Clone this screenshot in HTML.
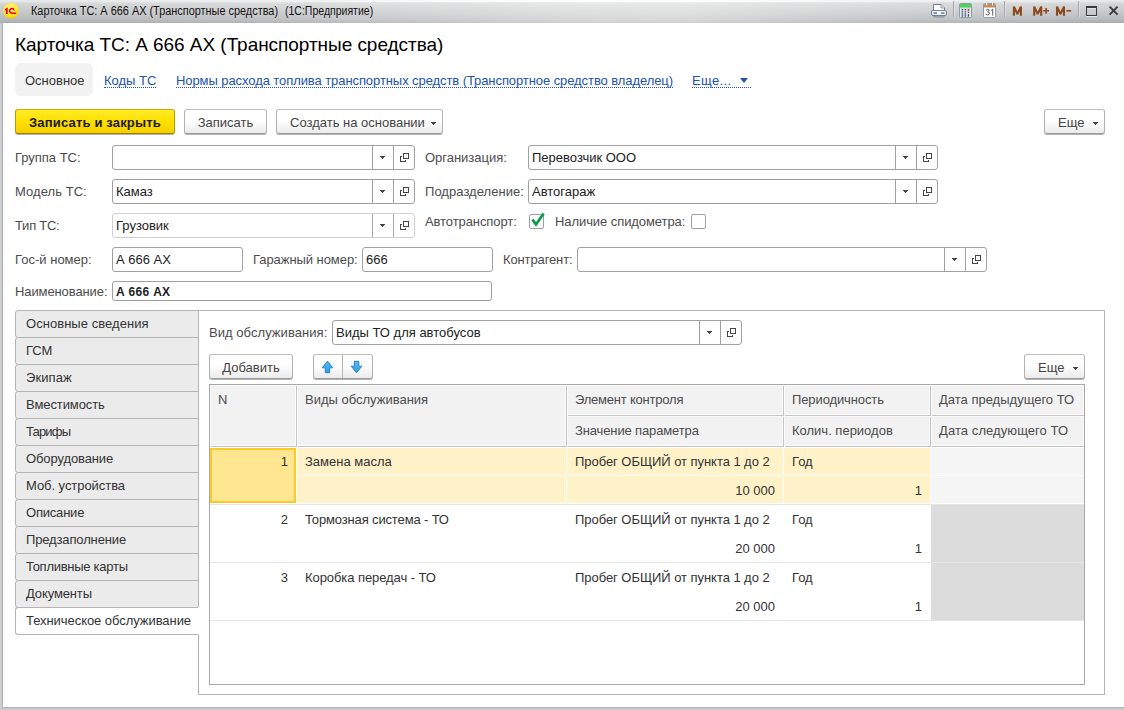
<!DOCTYPE html>
<html lang="ru">
<head>
<meta charset="utf-8">
<title>Карточка ТС</title>
<style>
*{box-sizing:border-box;margin:0;padding:0}
html,body{width:1124px;height:710px;overflow:hidden;background:#fff}
body{font-family:"Liberation Sans",sans-serif;font-size:13px;color:#333;position:relative}
.abs{position:absolute}
#titlebar{left:0;top:0;width:1124px;height:23px;background:linear-gradient(to right,rgba(255,255,255,0) 0,rgba(255,255,255,.12) 25%,rgba(255,255,255,.42) 50%,rgba(255,255,255,.45) 60%,rgba(255,255,255,.15) 82%,rgba(255,255,255,0) 100%),linear-gradient(#e6e7e8 0,#e0e1e2 8%,#d3d4d5 18%,#c6c7c8 55%,#b8b9bb 85%,#a9aaac 100%)}
#titlebar .t{left:31px;top:4px;font-size:12px;color:#111;white-space:nowrap;transform-origin:0 0}
#lb{left:0;top:23px;width:3px;height:687px;background:linear-gradient(to right,#d5d6d8,#c6c7c9 50%,#adaeb0)}
#bb{left:2px;top:707px;width:1122px;height:3px;background:linear-gradient(#adaeb0,#c4c5c7 50%,#d0d1d3)}
#rb{display:none}
h1{letter-spacing:-.045px;left:15px;top:33px;font-size:19px;font-weight:normal;color:#000;white-space:nowrap;line-height:24px}
.lbl{color:#4c4c4c;white-space:nowrap;line-height:16px;height:16px}
.fld{background:#fff;border:1px solid #a0a0a0;border-radius:3px;height:25px;line-height:23px;padding-left:3px;color:#222;white-space:nowrap;overflow:hidden}
.fld.ro{border-color:#d0d0d0}
.fld .b{position:absolute;top:0;width:21px;height:23px;border-left:1px solid #a0a0a0}
.fld.ro .b{border-left-color:#a8a8a8}
.btn{padding-top:1px;border:1px solid;border-color:#bebebe #b2b2b2 #9c9c9c;border-radius:3px;background:linear-gradient(#fff 0,#fff 45%,#ebebeb 100%);box-shadow:0 1px 0 rgba(0,0,0,.3);height:25px;line-height:23px;text-align:center;color:#444;white-space:nowrap}
.tab{left:15px;width:184px;height:28px;background:#ebebeb;border:1px solid #b4b4b4;border-radius:3px 0 0 3px;padding-left:10px;line-height:26px;color:#333;white-space:nowrap}
.lnk{color:#2253ac;white-space:nowrap;line-height:16px;border-bottom:1px dotted #2253ac;height:15px}
.hc{background:#f2f2f2;color:#4c4c4c;padding-left:8px;line-height:29px;white-space:nowrap;box-shadow:inset 0 0 0 1px #fbfbfb, 1px 1px 0 #c4c4c4}
.cell{height:28px;line-height:29px;color:#333;white-space:nowrap}
</style>
</head>
<body>
<div id="titlebar" class="abs"><div class="abs" style="left:0;top:0;width:1124px;height:2px;background:linear-gradient(to right,rgba(255,255,255,.1) 0,rgba(255,255,255,.35) 25%,rgba(255,255,255,.85) 45%,rgba(255,255,255,.85) 65%,rgba(255,255,255,.3) 85%,rgba(255,255,255,.1) 100%)"></div><svg class="abs" style="left:0;top:0" width="1124" height="23" viewBox="0 0 1124 23">
<defs>
<radialGradient id="g1c" cx="0.45" cy="0.3" r="0.75"><stop offset="0" stop-color="#fff68a"/><stop offset="0.6" stop-color="#ffe62a"/><stop offset="1" stop-color="#f6c800"/></radialGradient>
</defs>
<circle cx="11" cy="10.8" r="7.8" fill="url(#g1c)"/>
<path d="M4.9 9.5 L6.6 7.8 H7.7 V13.9 H6 V10.2 L4.9 10.9 Z" fill="#e3000b"/>
<path d="M14 9.5 A2.4 2.4 0 1 0 11.9 13.2 H16.2" fill="none" stroke="#e3000b" stroke-width="1.5"/>
<path d="M14.6 11.2 A2 2 0 0 0 12.6 9.6" fill="none" stroke="#e3000b" stroke-width="0.8" opacity=".75"/>
<!-- printer -->
<g>
<path d="M933.5 10.5 V4.5 H941 L944.5 8 V10.5" fill="#fff" stroke="#6b7f96" stroke-width="1"/>
<path d="M941 4.5 V8 H944.5" fill="#e8eef5" stroke="#6b7f96" stroke-width="0.8"/>
<rect x="931.5" y="10.5" width="15" height="5" rx="1.5" fill="#f4f6f9" stroke="#6b7f96" stroke-width="1"/>
<rect x="933.5" y="12.3" width="3.5" height="1.6" fill="#6b7f96"/><rect x="941" y="12.3" width="3.5" height="1.6" fill="#6b7f96"/>
<path d="M933 16.3 H945 L944 17.6 H934 Z" fill="#8293a8"/>
</g>
<!-- separators -->
<g shape-rendering="crispEdges"><rect x="953" y="1" width="1" height="16" fill="#a9aaac"/><rect x="954" y="1" width="1" height="16" fill="#e4e4e5" opacity=".7"/>
<rect x="1004" y="1" width="1" height="16" fill="#a9aaac"/><rect x="1005" y="1" width="1" height="16" fill="#e4e4e5" opacity=".7"/>
<rect x="1078" y="1" width="1" height="16" fill="#a9aaac"/><rect x="1079" y="1" width="1" height="16" fill="#e4e4e5" opacity=".7"/></g>
<!-- calculator -->
<rect x="959.5" y="3.5" width="12" height="14" rx="1" fill="#dfe9f3" stroke="#8a9cb0"/>
<rect x="960" y="4" width="11" height="3.6" fill="#4fd257"/>
<g fill="#4a4f57"><rect x="961.6" y="9" width="1.6" height="1.3"/><rect x="964.6" y="9" width="1.6" height="1.3"/>
<rect x="961.6" y="11.2" width="1.6" height="1.3"/><rect x="964.6" y="11.2" width="1.6" height="1.3"/><rect x="967.8" y="11.6" width="1.3" height="1.3"/>
<rect x="961.6" y="13.3" width="1.6" height="1.3"/><rect x="964.6" y="13.3" width="1.6" height="1.3"/>
<rect x="961.6" y="15.3" width="1.6" height="1.3"/><rect x="964.6" y="15.3" width="1.6" height="1.3"/><rect x="967.8" y="14.2" width="1.3" height="2.4"/></g>
<rect x="967.7" y="8.8" width="1.5" height="2.2" fill="#ff2a2a"/>
<!-- calendar -->
<rect x="983.5" y="3.5" width="12" height="14" rx="1.2" fill="#fff" stroke="#8a9cb0"/>
<path d="M984 7.6 V5 Q984 4 985 4 H994 Q995 4 995 5 V7.6 Z" fill="#c68a5c"/>
<rect x="986.2" y="3" width="1" height="2.4" fill="#fff"/><rect x="992" y="3" width="1" height="2.4" fill="#fff"/>
<g fill="none" stroke="#505560" stroke-width=".95" stroke-linecap="round" stroke-linejoin="round"><path d="M986.3 10 Q987.6 8.7 988.9 9.6 Q989.9 10.9 987.7 11.9 Q990.3 12.5 989.3 14.3 Q988 15.7 986.1 14.4"/><path d="M991.2 10.4 L992.7 9.1 V15.2"/></g>
<!-- M M+ M- -->
<g fill="none" stroke="#8b4a1e" stroke-width="2.1" stroke-linejoin="bevel">
<path d="M1013.9 15.7 V6.6 L1017.4 14 L1020.9 6.6 V15.7"/>
<path d="M1034.2 15.7 V6.6 L1037.7 14 L1041.2 6.6 V15.7"/>
<path d="M1057 15.7 V6.6 L1060.5 14 L1064 6.6 V15.7"/>
</g>
<g fill="none" stroke="#8b4a1e" stroke-width="1.6"><path d="M1043.2 10.8 H1049 M1046.1 7.9 V13.7"/><path d="M1066.3 10.8 H1071.2"/></g>
<!-- maximize -->
<g shape-rendering="crispEdges"><rect x="1086" y="16" width="11" height="1" fill="#f2f2f2" opacity=".8"/><rect x="1087" y="8" width="9" height="1" fill="#e6e6e6" opacity=".8"/>
<rect x="1086" y="6" width="11" height="2" fill="#3c3c3c"/><rect x="1086" y="15" width="11" height="1" fill="#3c3c3c"/><rect x="1086" y="6" width="1" height="10" fill="#3c3c3c"/><rect x="1096" y="6" width="1" height="10" fill="#3c3c3c"/></g>
<path d="M1109.6 6.6 L1117.6 14.6 M1117.6 6.6 L1109.6 14.6" stroke="#3c3c3c" stroke-width="2" fill="none"/>
</svg><div class="abs t" id="t1" style="transform:scaleX(.909)">Карточка ТС: А 666 АХ (Транспортные средства)</div><div class="abs t" id="t2" style="left:285.4px;transform:scaleX(.876)">(1С:Предприятие)</div></div>
<div id="lb" class="abs"></div><div id="rb" class="abs"></div><div id="bb" class="abs"></div>
<h1 class="abs">Карточка ТС: А 666 АХ (Транспортные средства)</h1>
<div class="abs" style="left:15px;top:63px;width:78px;height:33px;background:#f2f2f2;border-radius:6px"></div>
<div class="abs lbl" style="left:25px;top:73px;color:#333">Основное</div>
<div class="abs lnk" style="left:104px;top:73px">Коды ТС</div>
<div class="abs lnk" style="left:176px;top:73px;letter-spacing:-.079px">Нормы расхода топлива транспортных средств (Транспортное средство владелец)</div>
<div class="abs lnk" style="left:692px;top:73px;width:59px;letter-spacing:.35px">Еще...</div>
<div class="abs" style="left:740px;top:78px;width:0;height:0;border-left:4.5px solid transparent;border-right:4.5px solid transparent;border-top:5px solid #2253ac"></div>

<div class="abs btn" style="left:15px;top:109px;width:160px;letter-spacing:.17px;background:linear-gradient(#ffeb2a 0,#ffe100 45%,#f6d000 100%);border-color:#ccab00 #b89a00 #9a8100;color:#1a1a1a;font-weight:bold">Записать и закрыть</div>
<div class="abs btn" style="left:184px;top:109px;width:83px">Записать</div>
<div class="abs btn" style="left:276px;top:109px;width:167px;text-align:left;padding-left:13px">Создать на основании<svg class="abs" style="left:154px;top:12px" width="5" height="3" viewBox="0 0 5 3" shape-rendering="crispEdges"><path d="M0 0h5v1H0zM1 1h3v1H1zM2 2h1v1H2z" fill="#444"/></svg></div>
<div class="abs btn" style="left:1044px;top:109px;width:61px;text-align:left;padding-left:13px">Еще<svg class="abs" style="left:48px;top:12px" width="5" height="3" viewBox="0 0 5 3" shape-rendering="crispEdges"><path d="M0 0h5v1H0zM1 1h3v1H1zM2 2h1v1H2z" fill="#444"/></svg></div>

<div class="abs lbl" style="left:15px;top:150px;letter-spacing:-0.027px">Группа ТС:</div>
<div class="abs fld" style="left:112px;top:145px;width:303px"><span class="b" style="left:259px"><svg class="abs" style="left:7px;top:10px" width="5" height="3" viewBox="0 0 5 3" shape-rendering="crispEdges"><path d="M0 0h5v1H0zM1 1h3v1H1zM2 2h1v1H2z" fill="#444"/></svg></span><span class="b" style="left:280px"><svg class="abs" style="left:6px;top:6px" width="11" height="11" viewBox="0 0 11 11" shape-rendering="crispEdges"><path d="M3.5 1.5h5v5h-5zM2 4.5H.5v5h5V8" fill="none" stroke="#444" stroke-width="1"/></svg></span></div>
<div class="abs lbl" style="left:15px;top:184px;letter-spacing:0.058px">Модель ТС:</div>
<div class="abs fld" style="left:112px;top:179px;width:303px">Камаз<span class="b" style="left:259px"><svg class="abs" style="left:7px;top:10px" width="5" height="3" viewBox="0 0 5 3" shape-rendering="crispEdges"><path d="M0 0h5v1H0zM1 1h3v1H1zM2 2h1v1H2z" fill="#444"/></svg></span><span class="b" style="left:280px"><svg class="abs" style="left:6px;top:6px" width="11" height="11" viewBox="0 0 11 11" shape-rendering="crispEdges"><path d="M3.5 1.5h5v5h-5zM2 4.5H.5v5h5V8" fill="none" stroke="#444" stroke-width="1"/></svg></span></div>
<div class="abs lbl" style="left:15px;top:218px;letter-spacing:-0.248px">Тип ТС:</div>
<div class="abs fld ro" style="left:112px;top:213px;width:303px">Грузовик<span class="b" style="left:259px"><svg class="abs" style="left:7px;top:10px" width="5" height="3" viewBox="0 0 5 3" shape-rendering="crispEdges"><path d="M0 0h5v1H0zM1 1h3v1H1zM2 2h1v1H2z" fill="#444"/></svg></span><span class="b" style="left:280px"><svg class="abs" style="left:6px;top:6px" width="11" height="11" viewBox="0 0 11 11" shape-rendering="crispEdges"><path d="M3.5 1.5h5v5h-5zM2 4.5H.5v5h5V8" fill="none" stroke="#444" stroke-width="1"/></svg></span></div>
<div class="abs lbl" style="left:15px;top:252px;letter-spacing:0.014px">Гос-й номер:</div>
<div class="abs fld" style="left:112px;top:247px;width:131px;height:25px;line-height:23px">А 666 АХ</div>
<div class="abs lbl" style="left:253px;top:252px;letter-spacing:-0.061px">Гаражный номер:</div>
<div class="abs fld" style="left:362px;top:247px;width:131px;height:25px;line-height:23px">666</div>
<div class="abs lbl" style="left:15px;top:284px;letter-spacing:-0.103px">Наименование:</div>
<div class="abs fld" style="left:112px;top:281px;width:380px;height:20px;line-height:18px;font-weight:bold;font-size:12px;letter-spacing:.3px;padding-top:1px">А 666 АХ</div>
<div class="abs lbl" style="left:425px;top:150px;letter-spacing:-0.019px">Организация:</div>
<div class="abs fld" style="left:528px;top:145px;width:410px">Перевозчик ООО<span class="b" style="left:366px"><svg class="abs" style="left:7px;top:10px" width="5" height="3" viewBox="0 0 5 3" shape-rendering="crispEdges"><path d="M0 0h5v1H0zM1 1h3v1H1zM2 2h1v1H2z" fill="#444"/></svg></span><span class="b" style="left:387px"><svg class="abs" style="left:6px;top:6px" width="11" height="11" viewBox="0 0 11 11" shape-rendering="crispEdges"><path d="M3.5 1.5h5v5h-5zM2 4.5H.5v5h5V8" fill="none" stroke="#444" stroke-width="1"/></svg></span></div>
<div class="abs lbl" style="left:425px;top:184px;letter-spacing:0.039px">Подразделение:</div>
<div class="abs fld" style="left:528px;top:179px;width:410px">Автогараж<span class="b" style="left:366px"><svg class="abs" style="left:7px;top:10px" width="5" height="3" viewBox="0 0 5 3" shape-rendering="crispEdges"><path d="M0 0h5v1H0zM1 1h3v1H1zM2 2h1v1H2z" fill="#444"/></svg></span><span class="b" style="left:387px"><svg class="abs" style="left:6px;top:6px" width="11" height="11" viewBox="0 0 11 11" shape-rendering="crispEdges"><path d="M3.5 1.5h5v5h-5zM2 4.5H.5v5h5V8" fill="none" stroke="#444" stroke-width="1"/></svg></span></div>
<div class="abs lbl" style="left:425px;top:214px;letter-spacing:-0.087px">Автотранспорт:</div>
<div class="abs" style="left:529px;top:214px;width:15px;height:15px;border:1px solid #a0a0a0;border-radius:2px;background:#fff"></div>
<svg class="abs" style="left:529px;top:211px" width="17" height="17" viewBox="0 0 17 17"><path d="M3.4 8.6 L7 13.4 L14.6 2.4" fill="none" stroke="#0b9b49" stroke-width="2.7" stroke-linejoin="miter"/></svg>
<div class="abs lbl" style="left:555px;top:214px;letter-spacing:-0.075px">Наличие спидометра:</div>
<div class="abs" style="left:691px;top:214px;width:15px;height:15px;border:1px solid #a0a0a0;border-radius:2px;background:#fff"></div>
<div class="abs lbl" style="left:503px;top:252px;letter-spacing:-0.121px">Контрагент:</div>
<div class="abs fld" style="left:577px;top:247px;width:410px"><span class="b" style="left:366px"><svg class="abs" style="left:7px;top:10px" width="5" height="3" viewBox="0 0 5 3" shape-rendering="crispEdges"><path d="M0 0h5v1H0zM1 1h3v1H1zM2 2h1v1H2z" fill="#444"/></svg></span><span class="b" style="left:387px"><svg class="abs" style="left:6px;top:6px" width="11" height="11" viewBox="0 0 11 11" shape-rendering="crispEdges"><path d="M3.5 1.5h5v5h-5zM2 4.5H.5v5h5V8" fill="none" stroke="#444" stroke-width="1"/></svg></span></div>

<div class="abs" style="left:198px;top:310px;width:907px;height:385px;border:1px solid #b4b4b4;background:#fff"></div>
<div class="abs tab" style="top:310px;letter-spacing:0.043px">Основные сведения</div>
<div class="abs tab" style="top:337px;letter-spacing:-0.150px">ГСМ</div>
<div class="abs tab" style="top:364px;letter-spacing:0.090px">Экипаж</div>
<div class="abs tab" style="top:391px;letter-spacing:-0.099px">Вместимость</div>
<div class="abs tab" style="top:418px;letter-spacing:-0.825px">Тарифы</div>
<div class="abs tab" style="top:445px;letter-spacing:-0.105px">Оборудование</div>
<div class="abs tab" style="top:472px;letter-spacing:-0.054px">Моб. устройства</div>
<div class="abs tab" style="top:499px;letter-spacing:-0.201px">Описание</div>
<div class="abs tab" style="top:526px;letter-spacing:-0.141px">Предзаполнение</div>
<div class="abs tab" style="top:553px;letter-spacing:-0.270px">Топливные карты</div>
<div class="abs tab" style="top:580px;letter-spacing:-0.120px">Документы</div>
<div class="abs tab" style="top:607px;background:#fff;border-right-color:#fff;letter-spacing:-0.056px">Техническое обслуживание</div>

<div class="abs lbl" style="left:209px;top:325px;letter-spacing:0.051px">Вид обслуживания:</div>
<div class="abs fld" style="left:332px;top:320px;width:410px">Виды ТО для автобусов<span class="b" style="left:366px"><svg class="abs" style="left:7px;top:10px" width="5" height="3" viewBox="0 0 5 3" shape-rendering="crispEdges"><path d="M0 0h5v1H0zM1 1h3v1H1zM2 2h1v1H2z" fill="#444"/></svg></span><span class="b" style="left:387px"><svg class="abs" style="left:6px;top:6px" width="11" height="11" viewBox="0 0 11 11" shape-rendering="crispEdges"><path d="M3.5 1.5h5v5h-5zM2 4.5H.5v5h5V8" fill="none" stroke="#444" stroke-width="1"/></svg></span></div>
<div class="abs btn" style="left:209px;top:354px;width:84px">Добавить</div>
<div class="abs btn" style="left:313px;top:354px;width:60px"><span class="abs" style="left:28px;top:0;width:1px;height:23px;background:#b5b5b5"></span><svg class="abs" style="left:0;top:0" width="58" height="23" viewBox="0 0 58 23"><defs><linearGradient id="ga" x1="0" y1="0" x2="0" y2="1"><stop offset="0" stop-color="#58b8f2"/><stop offset="1" stop-color="#2f9fe6"/></linearGradient></defs><g fill="url(#ga)" stroke="#1c7bc3" stroke-width=".9" stroke-linejoin="miter"><path d="M13.5 6.2 L18.8 12.8 H15.7 V17.7 H11.3 V12.8 H8.2 Z"/><path d="M42.5 17.8 L47.8 11.2 H44.8 V6.3 H40.3 V11.2 H37.2 Z"/></g></svg></div>
<div class="abs btn" style="left:1024px;top:354px;width:61px;text-align:left;padding-left:13px">Еще<svg class="abs" style="left:48px;top:12px" width="5" height="3" viewBox="0 0 5 3" shape-rendering="crispEdges"><path d="M0 0h5v1H0zM1 1h3v1H1zM2 2h1v1H2z" fill="#444"/></svg></div>
<div id="tbl" class="abs" style="left:209px;top:384px;width:876px;height:301px;border:1px solid #a9a9a9;background:#fff;overflow:hidden">
<div class="abs hc" style="left:0px;top:0px;width:86px;height:61px">N</div>
<div class="abs hc" style="left:87px;top:0px;width:269px;height:61px">Виды обслуживания</div>
<div class="abs hc" style="left:357px;top:0px;width:216px;height:30px;letter-spacing:-0.21px">Элемент контроля</div>
<div class="abs hc" style="left:357px;top:31px;width:216px;height:30px;letter-spacing:-0.13px">Значение параметра</div>
<div class="abs hc" style="left:574px;top:0px;width:146px;height:30px;letter-spacing:-0.11px">Периодичность</div>
<div class="abs hc" style="left:574px;top:31px;width:146px;height:30px">Колич. периодов</div>
<div class="abs hc" style="left:721px;top:0px;width:153px;height:30px">Дата предыдущего ТО</div>
<div class="abs hc" style="left:721px;top:31px;width:153px;height:30px;letter-spacing:0.08px">Дата следующего ТО</div>
<div class="abs" style="left:0;top:63px;width:874px;height:55px;background:#fff2c8"></div>
<div class="abs" style="left:721px;top:63px;width:153px;height:55px;background:#f5f5f5"></div>
<div class="abs" style="left:0;top:63px;width:86px;height:55px;background:#ffe792;border:2px solid #fbc92a"></div>
<div class="abs" style="left:86px;top:62px;width:1px;height:57px;background:#fff"></div>
<div class="abs" style="left:356px;top:62px;width:1px;height:57px;background:#fff"></div>
<div class="abs" style="left:573px;top:62px;width:1px;height:57px;background:#fff"></div>
<div class="abs" style="left:87px;top:90px;width:633px;height:1px;background:#fff"></div><div class="abs" style="left:720px;top:90px;width:154px;height:1px;background:#fff"></div><div class="abs" style="left:720px;top:62px;width:1px;height:57px;background:#fff"></div>
<div class="abs" style="left:0;top:119px;width:874px;height:1px;background:#e6e6e6"></div>
<div class="abs cell" style="left:0;top:62px;width:78px;text-align:right">1</div>
<div class="abs cell" style="left:95px;top:62px">Замена масла</div>
<div class="abs cell" style="left:365px;top:62px;letter-spacing:-0.05px">Пробег ОБЩИЙ от пункта 1 до 2</div>
<div class="abs cell" style="left:582px;top:62px">Год</div>
<div class="abs cell" style="left:357px;top:91px;width:208px;text-align:right">10 000</div>
<div class="abs cell" style="left:574px;top:91px;width:138px;text-align:right">1</div>
<div class="abs" style="left:0;top:120px;width:874px;height:57px;background:#fff"></div>
<div class="abs" style="left:721px;top:120px;width:153px;height:57px;background:#dcdcdc"></div>
<div class="abs" style="left:0;top:177px;width:874px;height:1px;background:#e6e6e6"></div>
<div class="abs cell" style="left:0;top:120px;width:78px;text-align:right">2</div>
<div class="abs cell" style="left:95px;top:120px;letter-spacing:-0.14px">Тормозная система - ТО</div>
<div class="abs cell" style="left:365px;top:120px;letter-spacing:-0.05px">Пробег ОБЩИЙ от пункта 1 до 2</div>
<div class="abs cell" style="left:582px;top:120px">Год</div>
<div class="abs cell" style="left:357px;top:149px;width:208px;text-align:right">20 000</div>
<div class="abs cell" style="left:574px;top:149px;width:138px;text-align:right">1</div>
<div class="abs" style="left:0;top:178px;width:874px;height:57px;background:#fff"></div>
<div class="abs" style="left:721px;top:178px;width:153px;height:57px;background:#dcdcdc"></div>
<div class="abs" style="left:0;top:235px;width:874px;height:1px;background:#e6e6e6"></div>
<div class="abs cell" style="left:0;top:178px;width:78px;text-align:right">3</div>
<div class="abs cell" style="left:95px;top:178px;letter-spacing:-0.075px">Коробка передач - ТО</div>
<div class="abs cell" style="left:365px;top:178px;letter-spacing:-0.05px">Пробег ОБЩИЙ от пункта 1 до 2</div>
<div class="abs cell" style="left:582px;top:178px">Год</div>
<div class="abs cell" style="left:357px;top:207px;width:208px;text-align:right">20 000</div>
<div class="abs cell" style="left:574px;top:207px;width:138px;text-align:right">1</div>
</div>

</body>
</html>
